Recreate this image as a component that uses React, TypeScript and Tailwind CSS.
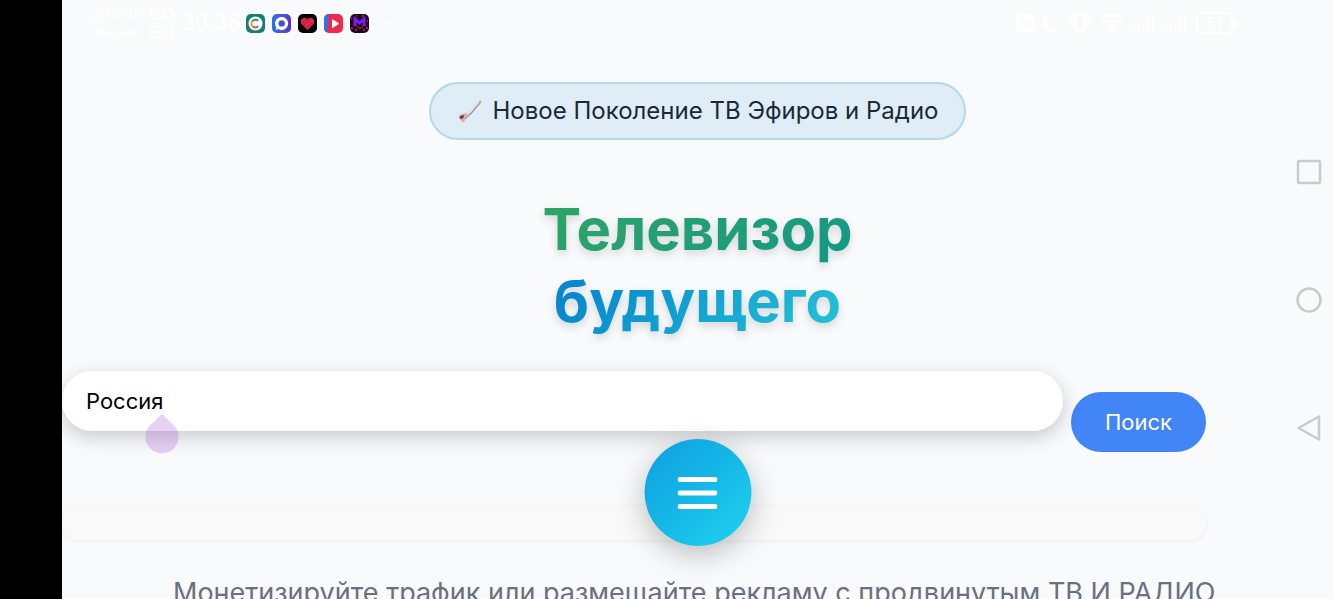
import { ReactNode } from 'react';

// Small app badge in the notification area
function AppIcon({ label, className, children }: { label: string; className: string; children: ReactNode }) {
  return (
    <span className={`block h-[19px] w-[19px] overflow-hidden rounded-[5px] ${className}`}>
      <svg viewBox="0 0 19 19" className="h-full w-full" role="img" aria-label={label}>
        {children}
      </svg>
    </span>
  );
}

function Operator({ name }: { name: string }) {
  return (
    <div className="flex items-center justify-between gap-1">
      <span>{name}</span>
      <svg viewBox="0 0 24 12" className="h-3 w-6" fill="none" stroke="currentColor" strokeWidth="1.5">
        <rect x="1" y="1" width="22" height="10" rx="2" />
        <path d="M5 3.5v5M9 3.5v5M5 6h4M13 3.5v5h2.5q2.500-2.500 0-5z" />
      </svg>
    </div>
  );
}

function Signal() {
  return (
    <svg viewBox="0 0 24 20" className="h-5 w-6" fill="currentColor">
      <rect x="0" y="15" width="3" height="4" rx="1" />
      <rect x="5" y="12" width="3" height="7" rx="1" />
      <rect x="10" y="9" width="3" height="10" rx="1" />
      <rect x="15" y="5" width="3" height="14" rx="1" />
      <rect x="20" y="1" width="3" height="18" rx="1" />
    </svg>
  );
}

function StatusBar() {
  return (
    <div className="flex h-[46px] items-center pl-8 pr-24 text-white">
      <div className="w-20 text-[11px] font-semibold leading-[18px]">
        <Operator name="MTS RUS" />
        <Operator name="MegaFon" />
      </div>
      <time className="ml-2 w-16 font-['Roboto','Noto_Sans',sans-serif] text-[23px] font-medium">20:35</time>
      <div className="flex items-center gap-[7px]">
        <AppIcon label="C" className="bg-[#16806f]">
          <circle cx="9.500" cy="9.500" r="7" fill="#fff" />
          <path d="M12.200 6.800A4 4 0 0 0 6 7.600" stroke="#2f9c62" strokeWidth="2" fill="none" />
          <path d="M6 7.600A4 4 0 0 0 7 12.600" stroke="#e9a23b" strokeWidth="2" fill="none" />
          <path d="M7 12.600A4 4 0 0 0 12.200 12.200" stroke="#e5533d" strokeWidth="2" fill="none" />
        </AppIcon>
        <AppIcon label="Чат" className="bg-linear-to-r from-[#1f74e8] to-[#5b2fc4]">
          <path d="M9.500 3a6.500 6.500 0 1 1-3.200 12.100L3.800 16l.5-2.700A6.500 6.500 0 0 1 9.500 3z" fill="#fff" />
          <circle cx="9.700" cy="9.400" r="3.200" fill="#3f52d8" />
        </AppIcon>
        <AppIcon label="Сердце" className="bg-black">
          <path d="M9.500 16 3.600 10C.8 6.500 5.500 1.500 9.500 5.400c4-3.900 8.700 1.100 5.900 4.600z" fill="#e8264b" />
          <path d="m4 9 5-4M5.500 11.500l7-6M8 14l7-6" stroke="#a91435" strokeWidth=".8" />
        </AppIcon>
        <AppIcon label="Видео" className="bg-[#f0284a]">
          <path d="M0 0h5L3 19H0z" fill="#2775ec" />
          <path d="M8 6v7.400q0 1 1 .4l5.400-3.500q.9-.6 0-1.200L9 5.600Q8 5 8 6z" fill="#fff" />
        </AppIcon>
        <AppIcon label="M" className="bg-[#210620]">
          <path d="M5 12V5l4.500 4L14 5v7" stroke="#7a1df0" strokeWidth="3" fill="none" />
          <path d="M1 14h2M5 16h2M9 14h2M13 16h2M16 14h2M1 4h1M17 7h1M7 13h1M12 13h1M6 2h1M12 2h2" stroke="#d0265f" strokeWidth="1.500" />
        </AppIcon>
        <svg viewBox="0 0 18 4" className="h-1 w-[18px]" fill="currentColor">
          <circle cx="3" cy="2" r="1.500" />
          <circle cx="9" cy="2" r="1.500" />
          <circle cx="15" cy="2" r="1.500" />
        </svg>
      </div>

      <div className="ml-auto flex items-center gap-2">
        <svg viewBox="0 0 18 20" className="h-5 w-[18px]" fill="currentColor" fillRule="evenodd">
          <path d="M4 1h10a4 4 0 0 1 4 4v10a4 4 0 0 1-4 4H4a4 4 0 0 1-4-4V5a4 4 0 0 1 4-4zM4 5v11h2V9l8 7V5h-2v6L5 5z" />
        </svg>
        <svg viewBox="0 0 18 20" className="h-5 w-[18px]" fill="currentColor">
          <path d="M7 1.500A9 9 0 1 0 18 13 7.500 7.500 0 0 1 7 1.500z" />
        </svg>
        <svg viewBox="0 0 24 20" className="h-5 w-6" fill="none" stroke="currentColor" strokeWidth="2">
          <rect x="7.500" y="1.500" width="9" height="17" rx="1.500" strokeWidth="3" />
          <path d="M4 4v12M20 4v12M1 7v6M23 7v6" />
        </svg>
        <svg viewBox="0 0 24 20" className="h-5 w-6" fill="none" stroke="currentColor" strokeWidth="3">
          <path d="M1 7q11-10 22 0M5 11q7-6 14 0M9 15q3-3 6 0" />
          <circle cx="12" cy="17" r="1" />
        </svg>
        <Signal />
        <Signal />
        <div className="flex items-center gap-px">
          <span className="rounded-md border-2 border-white px-2 text-base font-bold leading-[18px]">51</span>
          <span className="h-2 w-[3px] rounded-r bg-white" />
        </div>
      </div>
    </div>
  );
}

function ViolinIcon() {
  return (
    <svg viewBox="0 0 26 24" className="h-6 w-[26px]" fill="none" aria-hidden="true">
      <path d="M8 16Q14 14 17 9l6-6" stroke="#b9afb2" strokeWidth="3" strokeLinecap="round" />
      <path d="M9 15q5-2 8-7l5-5" stroke="#efe8e9" strokeWidth="1.500" />
      <path d="M2 17q3-3 7-3 2 1 1 4l-3 5q-3 1-3-2-3-1-2-4z" fill="#d3b6ba" />
      <path d="M2.500 17.500q3-2 5-1l-2 3.500q-3 0-3-2.500z" fill="#7d3441" />
      <path d="m8 20 6-5 4-5 5-6" stroke="#94868a" strokeWidth="1" />
    </svg>
  );
}

// System navigation strip on the right edge
function SystemNav() {
  const button = 'flex h-8 w-8 items-center justify-center';
  return (
    <nav className="absolute inset-y-0 right-2 flex flex-col justify-center gap-24 text-[#c9cacc]" aria-label="Система">
      <button className={button} aria-label="Недавние">
        <svg viewBox="0 0 26 26" className="h-[26px] w-[26px]" fill="none" stroke="currentColor" strokeWidth="2.500">
          <rect x="2" y="2" width="22" height="22" rx="1.500" />
        </svg>
      </button>
      <button className={button} aria-label="Домой">
        <svg viewBox="0 0 26 26" className="h-[26px] w-[26px]" fill="none" stroke="currentColor" strokeWidth="2.500">
          <circle cx="13" cy="13" r="11.500" />
        </svg>
      </button>
      <button className={button} aria-label="Назад">
        <svg viewBox="0 0 26 26" className="h-[26px] w-[26px]" fill="none" stroke="currentColor" strokeWidth="2.500" strokeLinejoin="round">
          <path d="M23 1.500v23L2.500 13z" />
        </svg>
      </button>
    </nav>
  );
}

export default function App() {
  return (
    <div className="flex h-screen overflow-hidden bg-black font-['Inter','Noto_Sans',sans-serif]">
      <main className="relative ml-[62px] min-w-0 flex-1 bg-[#f8fafc]">
        <StatusBar />

        <header className="mt-9 flex flex-col items-center">
          <div className="flex h-[58px] items-center gap-2.5 rounded-full border-2 border-[#b5d9ea] bg-[#deedf6] px-[26px] text-2xl text-[#1b2836]">
            <ViolinIcon />
            <span>Новое Поколение ТВ Эфиров и Радио</span>
          </div>
          <h1 className="mt-[53px] flex flex-col items-center text-[58px] font-bold leading-[72px] drop-shadow-[0_4px_4px_rgba(0,0,0,0.15)]">
            <span className="bg-linear-135 from-[#30a463] to-[#119886] bg-clip-text text-transparent">Телевизор</span>
            <span className="bg-linear-135 from-[#087fcb] to-[#25c4d4] bg-clip-text text-transparent">будущего</span>
          </h1>
        </header>

        <form className="mt-[34px] flex items-start gap-2 pr-[127px]" onSubmit={(e) => e.preventDefault()}>
          <div className="relative min-w-0 flex-1">
            <input
              type="text"
              aria-label="Поиск"
              defaultValue="Россия"
              className="block h-[60px] w-full rounded-full bg-white px-6 text-[22px] text-black shadow-[0_6px_20px_rgba(0,0,0,0.2)] outline-none"
            />
            {/* text cursor handle */}
            <svg viewBox="0 0 34 40" className="absolute left-[83px] top-[43px] h-10 w-[34px]" aria-hidden="true">
              <path d="M17 0 28.700 11.300a16.500 16.500 0 1 1-23.400 0z" fill="#b36bd6" fillOpacity=".3" />
            </svg>
          </div>
          <button type="submit" className="mt-[21px] h-[60px] w-[135px] rounded-full bg-[#4285f7] text-[22px] text-white">
            Поиск
          </button>
        </form>

        <div className="mr-[127px] mt-[54px] h-[34px] rounded-2xl bg-[#f9f9f9] shadow-[0_1px_5px_rgba(0,0,0,0.06)]" />

        <p className="mt-9 whitespace-nowrap pl-[111px] text-[27px] leading-[34px] text-[#6b7080]">
          Монетизируйте трафик или размещайте рекламу с продвинутым ТВ И РАДИО
        </p>

        <button
          aria-label="Меню"
          className="absolute bottom-[53px] left-1/2 flex h-[107px] w-[107px] -translate-x-1/2 items-center justify-center rounded-full bg-linear-135 from-[#109de0] to-[#20d3ee] shadow-[0_8px_30px_rgba(0,0,0,0.25)]"
        >
          <svg viewBox="0 0 40 32" className="h-8 w-10" stroke="#fff" strokeWidth="5" strokeLinecap="round">
            <path d="M2.500 2.500h35M2.500 16h35M2.500 29.500h35" />
          </svg>
        </button>

        <SystemNav />
      </main>
    </div>
  );
}
